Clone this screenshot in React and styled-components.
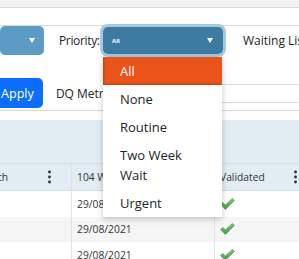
import React from "react";
import styled, { createGlobalStyle } from "styled-components";

const GlobalStyle = createGlobalStyle`
  body {
    margin: 0;
    background: #fff;
    font-family: "Open Sans", "Noto Sans", Arial, sans-serif;
    color: #212529;
  }
`;

const Page = styled.div`
  position: relative;
  width: 299px;
  height: 259px;
  overflow: hidden;
  background: #fff;
`;

const TopBand = styled.div`
  height: 7px;
  background: #f3f3f3;
  border-bottom: 1px solid #dcdcdc;
`;

const Filters = styled.div`
  margin-top: 17px;
  border-top: 1px solid #d6d9dc;
  border-bottom: 1px solid #d6d9dc;
  padding-bottom: 2px;
`;

const FilterRow = styled.div`
  display: flex;
  align-items: center;
  height: 29px;
  white-space: nowrap;

  > * {
    flex-shrink: 0;
  }
`;

const Caret = styled.span`
  width: 0;
  height: 0;
  border-left: 3.5px solid transparent;
  border-right: 3.5px solid transparent;
  border-top: 5px solid #fff;
`;

const Select = styled.div`
  display: flex;
  align-items: center;
  justify-content: space-between;
  box-sizing: border-box;
  height: ${({ focused }) => (focused ? "27px" : "29px")};
  width: ${({ width }) => width}px;
  padding: ${({ focused }) => (focused ? "0 10px 0 9px" : "0 9px 0 0")};
  background: ${({ focused }) => (focused ? "#3e7ba3" : "#5b9bc4")};
  border-radius: 5px;
  box-shadow: ${({ focused }) => (focused ? "0 0 0 3px #a6c9e0" : "none")};
  color: #fff;
  font-size: 6px;
  font-weight: 700;
`;

const SelectWrap = styled.div`
  position: relative;
`;

const Label = styled.span`
  display: inline-block;
  font-size: 12px;
  letter-spacing: ${({ tight }) => (tight ? "-0.35px" : "0")};
  margin-left: ${({ gap }) => gap}px;
  width: ${({ width }) => (width ? `${width}px` : "auto")};
`;

const Menu = styled.ul`
  position: absolute;
  top: calc(100% + 3px);
  left: 0;
  width: 119px;
  margin: 0;
  padding: 0;
  list-style: none;
  background: #fff;
  box-shadow: 0 2px 6px rgba(0, 0, 0, 0.22);
  z-index: 5;
`;

const MenuItem = styled.li`
  box-sizing: border-box;
  padding: 4px 8px 4px 17px;
  font-size: 13px;
  line-height: 20px;
  white-space: normal;
  color: ${({ active }) => (active ? "#fff" : "#212529")};
  background: ${({ active }) => (active ? "#e9541b" : "transparent")};
  box-shadow: ${({ active }) =>
    active ? "inset 1.5px -1.5px 0 #c84713" : "none"};
  width: ${({ narrow }) => (narrow ? "90px" : "auto")};
`;

const ActionRow = styled.div`
  display: flex;
  align-items: center;
  margin-top: 23px;
  white-space: nowrap;

  > * {
    flex-shrink: 0;
  }
`;

const ApplyButton = styled.button`
  height: 30px;
  margin-left: -9px;
  padding: 0 9px 0 10px;
  border: none;
  border-radius: 5px;
  background: #0d6efd;
  color: #fff;
  font-family: inherit;
  font-size: 12.6px;
`;

const LinkText = styled.span`
  margin-left: 13px;
  font-size: 12px;
`;

const SideBox = styled.div`
  align-self: flex-start;
  margin: 6px 0 0 60px;
  width: 120px;
  height: 17px;
  border-top: 1px solid #d6d9dc;
  border-bottom: 1px solid #d6d9dc;
`;

const Grid = styled.div`
  margin: 9px 0 0 -31px;
  font-size: 10.3px;
  color: #333;
`;

const GroupHeader = styled.div`
  height: 43px;
  background: #e2ecf3;
  border-bottom: 1px solid #d3dde5;
`;

const Row = styled.div`
  display: grid;
  grid-template-columns: 103px 143px 85px;
  height: ${({ head }) => (head ? "26px" : "25.5px")};
  background: ${({ head, alt }) => (head ? "#e2ecf3" : alt ? "#f5f5f5" : "#fff")};
  border-bottom: ${({ head }) => (head ? "1px solid #d3dde5" : "none")};
`;

const Cell = styled.div`
  display: flex;
  align-items: center;
  justify-content: space-between;
  padding: 0 ${({ pr }) => pr ?? 5}px 0 5px;
  border-right: 1px solid #dfe3e6;
  white-space: nowrap;
  overflow: hidden;
`;

const Dots = () => (
  <svg width="3" height="14" viewBox="0 0 3 14">
    <circle cx="1.5" cy="2" r="1.45" fill="#333" />
    <circle cx="1.5" cy="7" r="1.45" fill="#333" />
    <circle cx="1.5" cy="12" r="1.45" fill="#333" />
  </svg>
);

const Check = () => (
  <svg width="15" height="12" viewBox="0 0 15 12">
    <defs>
      <linearGradient id="ck" x1="0" y1="0" x2="0" y2="1">
        <stop offset="0" stopColor="#7fc77f" />
        <stop offset="1" stopColor="#4a9a4a" />
      </linearGradient>
    </defs>
    <path d="M0.6 6.6 L2.9 4.6 L5.4 7 L12.4 0.4 L14.4 2.4 L5.4 11.4 Z" fill="url(#ck)" stroke="#3f8a3f" strokeWidth="0.6" />
  </svg>
);

const rows = [false, true, false];

export default function App() {
  return (
    <Page>
      <GlobalStyle />
      <TopBand />
      <Filters>
        <FilterRow>
          <Select width={44}>
            <span />
            <Caret />
          </Select>
          <Label gap={15} width={44} tight>Priority:</Label>
          <SelectWrap>
            <Select focused width={120}>
              <span>All</span>
              <Caret />
            </Select>
            <Menu>
              <MenuItem active>All</MenuItem>
              <MenuItem>None</MenuItem>
              <MenuItem>Routine</MenuItem>
              <MenuItem narrow>Two Week Wait</MenuItem>
              <MenuItem>Urgent</MenuItem>
            </Menu>
          </SelectWrap>
          <Label gap={20}>Waiting List:</Label>
        </FilterRow>
        <ActionRow>
          <ApplyButton>Apply</ApplyButton>
          <LinkText>DQ Metrics</LinkText>
          <SideBox />
        </ActionRow>
      </Filters>
      <Grid>
        <GroupHeader />
        <Row head>
          <Cell pr={20}>
            <span>Branch</span>
            <Dots />
          </Cell>
          <Cell>104 Week Date</Cell>
          <Cell pr={2}>
            <span>Validated</span>
            <Dots />
          </Cell>
        </Row>
        {rows.map((alt, i) => (
          <Row key={i} alt={alt}>
            <Cell />
            <Cell>29/08/2021</Cell>
            <Cell>
              <Check />
            </Cell>
          </Row>
        ))}
      </Grid>
    </Page>
  );
}
